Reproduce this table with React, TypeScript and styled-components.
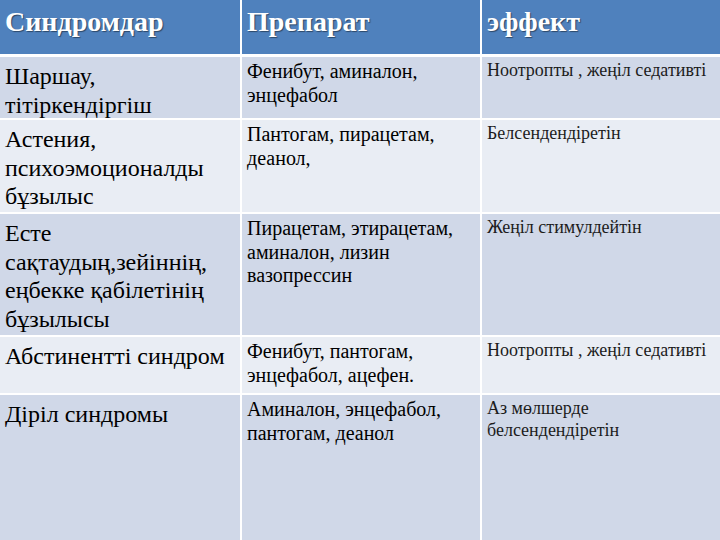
import styled, { createGlobalStyle } from 'styled-components'

const serif = "'Liberation Serif', 'Times New Roman', serif"

const GlobalStyle = createGlobalStyle`
  html, body {
    margin: 0;
    padding: 0;
    background: #ffffff;
  }
  body {
    width: 720px;
    height: 540px;
    overflow: hidden;
    font-family: ${serif};
  }
`

const Table = styled.div`
  display: grid;
  grid-template-columns: 240px 238px 238px;
  column-gap: 2px;
  width: 720px;
  height: 540px;
  background: #ffffff;
`

const HeaderCell = styled.div`
  font-family: ${serif};
  height: 54px;
  margin-bottom: 3px;
  background: #4f81bd;
  color: #ffffff;
  font-weight: bold;
  font-size: 28px;
  line-height: 44px;
  padding: 0 5px;
  box-sizing: border-box;
  text-shadow: 1px 1px 1px rgba(0, 0, 0, 0.45);
`

const Cell = styled.div<{ $alt: boolean; $h: number; $last?: boolean }>`
  height: ${(p) => p.$h}px;
  margin-bottom: ${(p) => (p.$last ? 0 : 2)}px;
  background: ${(p) => (p.$alt ? '#e9edf4' : '#d0d8e8')};
  color: #000000;
  padding: 0 5px;
  box-sizing: border-box;
  overflow: hidden;
`

const SyndromeLine = styled.div`
  font-family: ${serif};
  font-size: 24px;
  line-height: 28.5px;
  &:first-child {
    margin-top: 5px;
  }
`

const DrugLine = styled.div`
  font-family: ${serif};
  font-size: 20px;
  line-height: 23.5px;
  &:first-child {
    margin-top: 3px;
  }
`

const EffectLine = styled.div`
  font-family: ${serif};
  font-size: 18px;
  line-height: 22px;
  color: #1c1c1c;
  &:first-child {
    margin-top: 2px;
  }
`

const rows = [
  {
    h: 61,
    syndrome: ['Шаршау,', 'тітіркендіргіш'],
    drug: ['Фенибут, аминалон,', 'энцефабол'],
    effect: ['Ноотропты , жеңіл седативті'],
  },
  {
    h: 92,
    syndrome: ['Астения,', 'психоэмоционалды', 'бұзылыс'],
    drug: ['Пантогам, пирацетам,', 'деанол,'],
    effect: ['Белсендендіретін'],
  },
  {
    h: 121,
    syndrome: ['Есте', 'сақтаудың,зейіннің,', 'еңбекке қабілетінің', 'бұзылысы'],
    drug: ['Пирацетам, этирацетам,', 'аминалон, лизин', 'вазопрессин'],
    effect: ['Жеңіл стимулдейтін'],
  },
  {
    h: 56,
    syndrome: ['Абстинентті синдром'],
    drug: ['Фенибут, пантогам,', 'энцефабол, ацефен.'],
    effect: ['Ноотропты , жеңіл седативті'],
  },
  {
    h: 145,
    syndrome: ['Діріл синдромы'],
    drug: ['Аминалон, энцефабол,', 'пантогам, деанол'],
    effect: ['Аз мөлшерде', 'белсендендіретін'],
  },
]

const App = () => {
  return (
    <>
      <GlobalStyle />
      <Table>
        <HeaderCell>Синдромдар</HeaderCell>
        <HeaderCell>Препарат</HeaderCell>
        <HeaderCell>эффект</HeaderCell>
        {rows.map((r, i) => {
          const alt = i % 2 === 1
          const last = i === rows.length - 1
          return [
            <Cell key={`s${i}`} $alt={alt} $h={r.h} $last={last}>
              {r.syndrome.map((t) => (
                <SyndromeLine key={t}>{t}</SyndromeLine>
              ))}
            </Cell>,
            <Cell key={`d${i}`} $alt={alt} $h={r.h} $last={last}>
              {r.drug.map((t) => (
                <DrugLine key={t}>{t}</DrugLine>
              ))}
            </Cell>,
            <Cell key={`e${i}`} $alt={alt} $h={r.h} $last={last}>
              {r.effect.map((t) => (
                <EffectLine key={t}>{t}</EffectLine>
              ))}
            </Cell>,
          ]
        })}
      </Table>
    </>
  )
}

export default App
